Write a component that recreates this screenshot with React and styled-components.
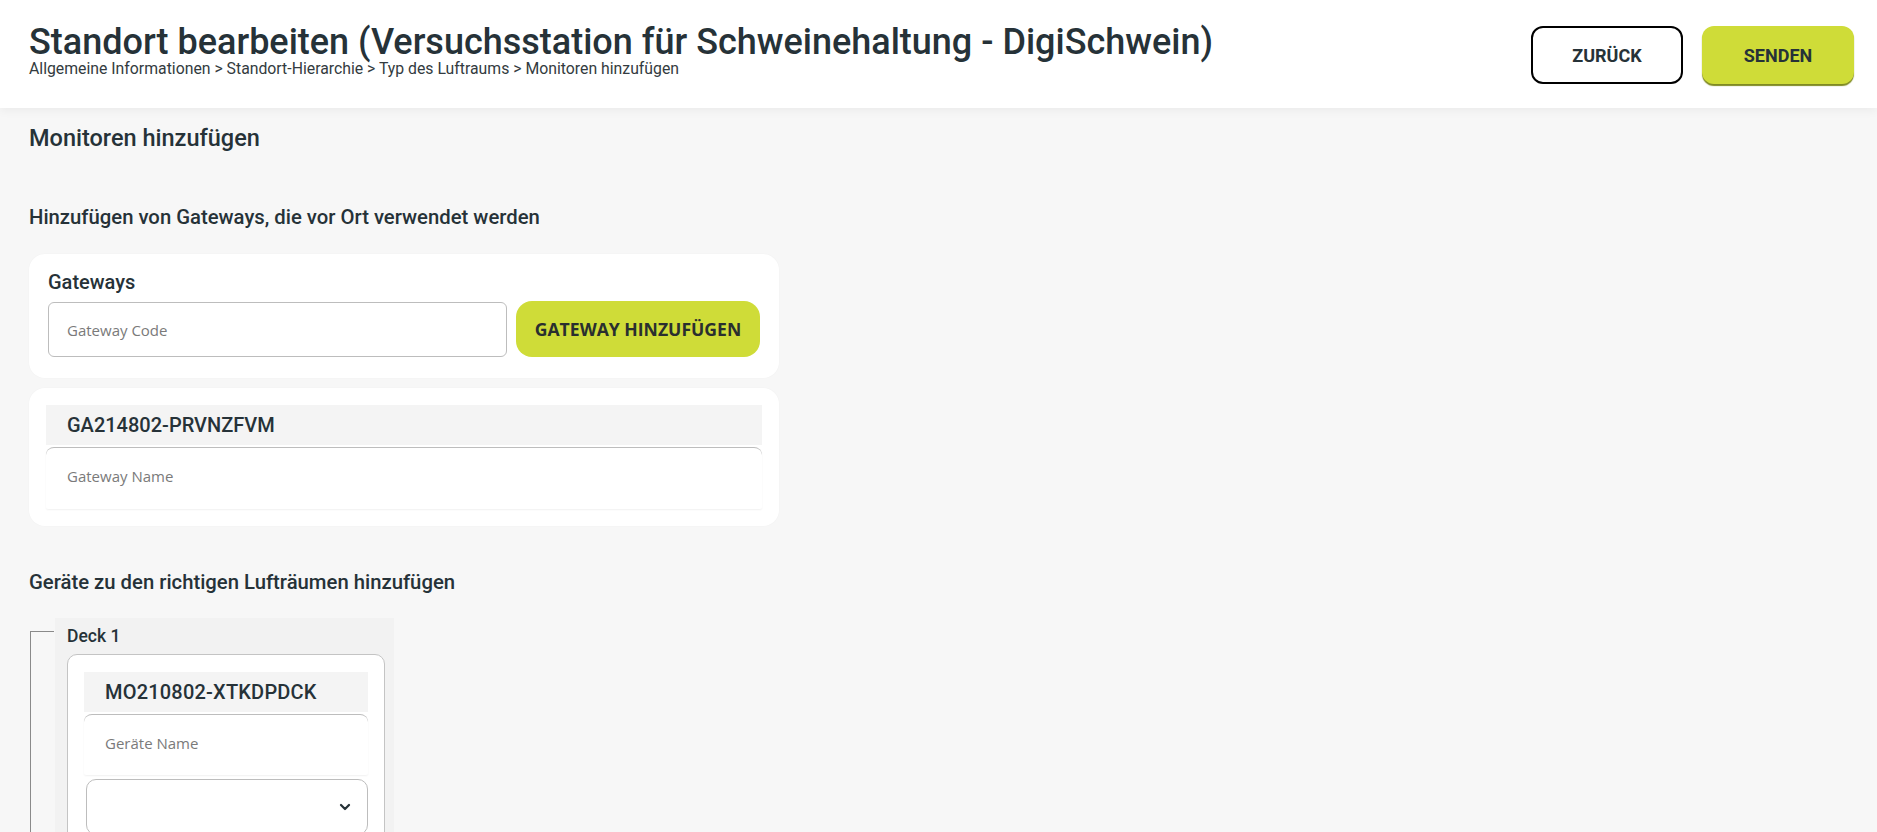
import React from "react";
import styled, { createGlobalStyle } from "styled-components";

const GlobalStyle = createGlobalStyle`
  html, body { margin: 0; padding: 0; }
  body {
    background: #f7f7f7;
    font-family: Roboto, "Liberation Sans", sans-serif;
    color: #263238;
  }
  * { box-sizing: border-box; }
`;

const Header = styled.header`
  height: 108px;
  background: #ffffff;
  box-shadow: 0 2px 10px rgba(0, 0, 0, 0.06);
  display: flex;
  justify-content: space-between;
  align-items: flex-start;
  padding: 24px 23px 0 29px;
  position: relative;
  z-index: 1;
`;

const TitleBlock = styled.div`
  display: flex;
  flex-direction: column;
`;

const Title = styled.h1`
  margin: 0;
  font-size: 36px;
  line-height: 36px;
  font-weight: 500;
  color: #263238;
`;

const Breadcrumb = styled.div`
  font-size: 15.8px;
  line-height: 18px;
  color: #333b40;
`;

const Actions = styled.div`
  display: flex;
  gap: 19px;
  margin-top: 2px;
`;

const HeaderButton = styled.button`
  width: 152px;
  height: 58px;
  border-radius: 12px;
  font-family: Roboto, "Liberation Sans", sans-serif;
  font-weight: 700;
  font-size: 18px;
  color: #263238;
  cursor: pointer;
  border: ${(p) => (p.$primary ? "none" : "2px solid #000")};
  background: ${(p) => (p.$primary ? "#cfdc38" : "#ffffff")};
  box-shadow: ${(p) => (p.$primary ? "0 2px 1px #7f8a22" : "none")};
`;

const Main = styled.main`
  padding: 18px 29px 0 29px;
  display: flex;
  flex-direction: column;
`;

const PageHeading = styled.h2`
  margin: 0;
  font-size: 23.5px;
  line-height: 24px;
  font-weight: 500;
  color: #263238;
`;

const SectionHeading = styled.h3`
  margin: ${(p) => p.$top}px 0 0 0;
  font-size: 20.3px;
  line-height: 22px;
  font-weight: 500;
  color: #263238;
`;

const Card = styled.section`
  width: 750px;
  background: #ffffff;
  border-radius: 16px;
  margin-top: ${(p) => p.$top}px;
  padding: ${(p) => p.$pad};
  box-shadow: 0 0 2px rgba(0, 0, 0, 0.03);
`;

const FieldLabel = styled.div`
  font-size: 20px;
  line-height: 24px;
  font-weight: 500;
  color: #263238;
  margin-bottom: 8px;
`;

const InputRow = styled.div`
  display: flex;
  gap: 9px;
`;

const TextInput = styled.input`
  flex: 1;
  height: 55px;
  border: 1px solid #bdbdbd;
  border-radius: 6px;
  padding: 0 18px;
  font-family: "Open Sans", sans-serif;
  font-size: 15px;
  color: #333;
  background: #fff;
  &::placeholder { color: #7a7a7a; }
`;

const AddButton = styled.button`
  width: 244px;
  height: 56px;
  border: none;
  border-radius: 16px;
  background: #cfdc38;
  font-family: "Open Sans", sans-serif;
  font-weight: 700;
  font-size: 17.6px;
  color: #2a2f2f;
  cursor: pointer;
  margin-top: -1px;
`;

const ItemHeader = styled.div`
  background: #f4f4f4;
  height: ${(p) => p.$h}px;
  display: flex;
  align-items: center;
  padding-left: 21px;
  font-size: 20px;
  font-weight: 500;
  color: #263238;
  letter-spacing: ${(p) => p.$ls || 0}px;
`;

const NameInput = styled.input`
  display: block;
  width: 100%;
  height: ${(p) => p.$h}px;
  margin-top: 2px;
  border: none;
  border-top: 1px solid #bdbdbd;
  border-radius: 8px 8px 2px 2px;
  background: #fff;
  box-shadow: 0 1px 2px rgba(0, 0, 0, 0.06);
  padding: 0 21px 5px 21px;
  font-family: "Open Sans", sans-serif;
  font-size: 15px;
  color: #333;
  &::placeholder { color: #7a7a7a; }
`;

const TreeRow = styled.div`
  display: flex;
  margin-top: 25px;
  align-items: stretch;
`;

const Connector = styled.div`
  width: 24px;
  margin-left: 1px;
  margin-top: 13px;
  margin-bottom: -40px;
  border-left: 1px solid #8a8a8a;
  border-top: 1px solid #8a8a8a;
  flex-shrink: 0;
`;

const Deck = styled.div`
  margin-left: 1px;
  width: 339px;
  background: #f2f2f2;
  padding: 8px 9px 0 12px;
`;

const DeckLabel = styled.div`
  font-size: 17.5px;
  line-height: 20px;
  font-weight: 500;
  color: #263238;
  margin-bottom: 8px;
`;

const DeviceCard = styled.div`
  background: #fff;
  border: 1px solid #c4c4c4;
  border-radius: 10px;
  padding: 17px 16px 20px 16px;
`;

const SelectBox = styled.div`
  position: relative;
  height: 56px;
  margin: 4px 0 0 2px;
  border: 1px solid #bdbdbd;
  border-radius: 10px;
  background: #fff;
  display: flex;
  align-items: center;
  justify-content: flex-end;
  padding-right: 14px;
`;

const Chevron = () => (
  <svg width="16" height="16" viewBox="0 0 24 24" fill="none" stroke="#263238" strokeWidth="3.4" strokeLinecap="round" strokeLinejoin="round">
    <polyline points="6 9 12 15 18 9" />
  </svg>
);

export default function App() {
  return (
    <>
      <GlobalStyle />
      <Header>
        <TitleBlock>
          <Title>Standort bearbeiten (Versuchsstation für Schweinehaltung - DigiSchwein)</Title>
          <Breadcrumb>
            Allgemeine Informationen &gt; Standort-Hierarchie &gt; Typ des Luftraums &gt; Monitoren hinzufügen
          </Breadcrumb>
        </TitleBlock>
        <Actions>
          <HeaderButton>ZURÜCK</HeaderButton>
          <HeaderButton $primary>SENDEN</HeaderButton>
        </Actions>
      </Header>
      <Main>
        <PageHeading>Monitoren hinzufügen</PageHeading>
        <SectionHeading $top={56}>Hinzufügen von Gateways, die vor Ort verwendet werden</SectionHeading>
        <Card $top={26} $pad="16px 19px 21px 19px">
          <FieldLabel>Gateways</FieldLabel>
          <InputRow>
            <TextInput placeholder="Gateway Code" />
            <AddButton>GATEWAY HINZUFÜGEN</AddButton>
          </InputRow>
        </Card>
        <Card $top={10} $pad="17px 17px 17px 17px">
          <ItemHeader $h={40}>GA214802-PRVNZFVM</ItemHeader>
          <NameInput $h={62} placeholder="Gateway Name" />
        </Card>
        <SectionHeading $top={45}>Geräte zu den richtigen Lufträumen hinzufügen</SectionHeading>
        <TreeRow>
          <Connector />
          <Deck>
            <DeckLabel>Deck 1</DeckLabel>
            <DeviceCard>
              <ItemHeader $h={40} $ls={0.2}>MO210802-XTKDPDCK</ItemHeader>
              <NameInput $h={61} placeholder="Geräte Name" />
              <SelectBox>
                <Chevron />
              </SelectBox>
            </DeviceCard>
          </Deck>
        </TreeRow>
      </Main>
    </>
  );
}
